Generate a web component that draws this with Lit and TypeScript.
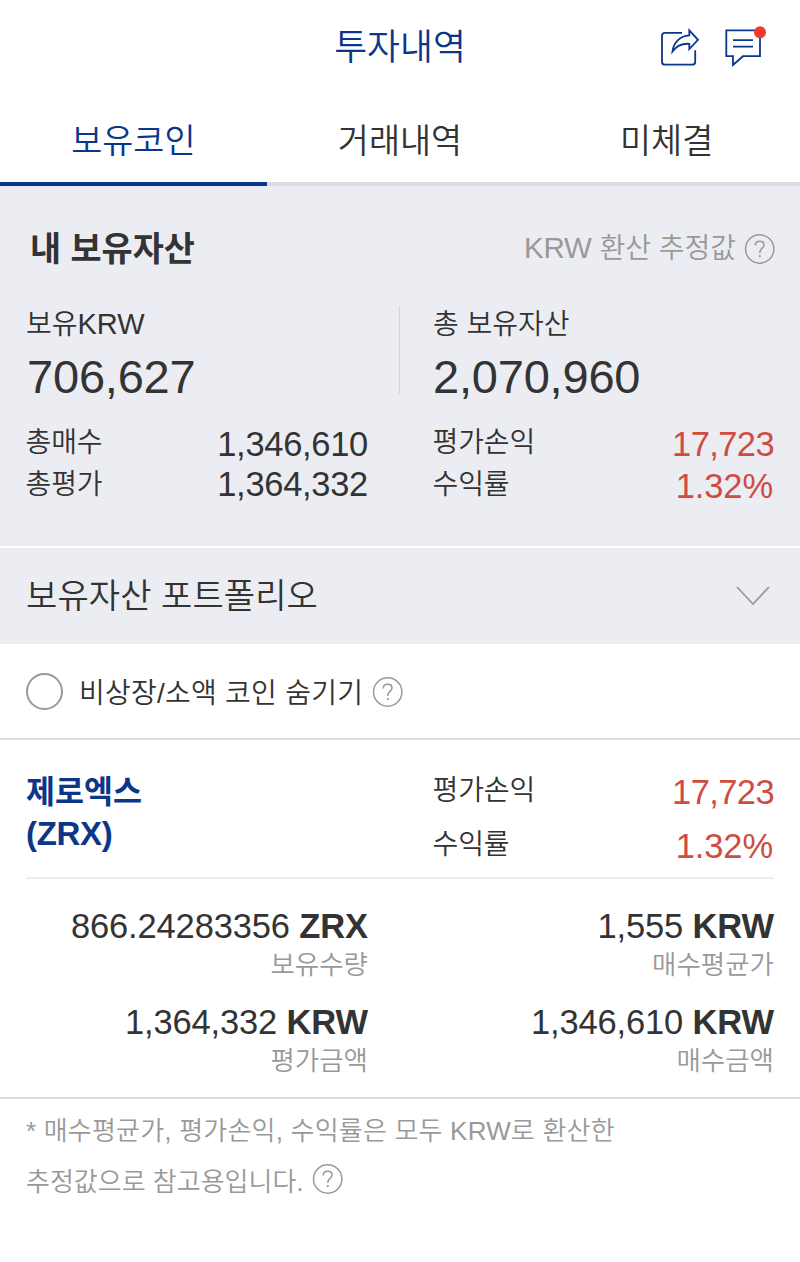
import { LitElement, html, css, svg } from "lit";
import { customElement, property } from "lit/decorators.js";

@customElement("help-icon")
class HelpIcon extends LitElement {
  static styles = css`
    :host { display: block; width: 32px; height: 32px; flex: none; }
    svg { display: block; }
  `;
  render() {
    return html`<svg width="32" height="32" viewBox="0 0 32 32" fill="none" stroke="#999" stroke-width="1.5">
      <circle cx="15.7" cy="16" r="14.2"></circle>
      <path d="M11.3 12.4C11.3 9.8 13 8.3 15.7 8.3C18.3 8.3 20 9.8 20 12C20 14 18.7 14.9 17.5 15.9C16.3 16.9 15.8 17.6 15.8 19.9"></path>
      <path d="M15.8 22.1V24.1" stroke-width="1.8"></path>
    </svg>`;
  }
}

@customElement("amount-cell")
class AmountCell extends LitElement {
  @property() value = "";
  @property() unit = "";
  @property() label = "";
  static styles = css`
    :host { display: block; text-align: right; white-space: nowrap; }
    .value { font-size: 34.5px; line-height: 40px; color: #333; letter-spacing: -0.15px; }
    .unit { font-weight: 700; letter-spacing: -0.1px; }
    .label { font-size: 26.5px; line-height: 39px; height: 38px; color: #999; font-weight: 350; }
  `;
  render() {
    return html`<div class="value">${this.value} <span class="unit">${this.unit}</span></div>
      <div class="label">${this.label}</div>`;
  }
}

@customElement("app-root")
class AppRoot extends LitElement {
  static styles = css`
    :host {
      display: block; width: 800px; height: 1262px; overflow: hidden; background: #fff; color: #333;
      font-family: "Liberation Sans", "Noto Sans CJK KR", sans-serif; white-space: nowrap; font-weight: 350;
    }
    * { box-sizing: border-box; }
    svg { display: block; }
    .header { height: 98px; display: grid; grid-template-columns: 1fr auto 1fr; align-items: start; }
    .title { grid-column: 2; font-size: 35.8px; line-height: 96px; color: #0c3688; }
    .actions { display: flex; justify-content: flex-end; gap: 20px; padding: 24px 32px 0 0; }
    .tabs { display: grid; grid-template-columns: repeat(3, 1fr); height: 88px; }
    .tab { text-align: center; font-size: 33.8px; line-height: 86px; height: 88px; border-bottom: 4px solid #dcdcdc; }
    .tab.active { color: #0c3688; border-bottom-color: #0c3688; }
    .assets { height: 362px; background: #ecedf3; border-bottom: 2px solid #fff; }
    .heading { height: 124px; display: flex; align-items: center; justify-content: space-between; padding: 2px 24px 0 30px; }
    .heading-title { font-size: 33.8px; font-weight: 700; line-height: 122px; }
    .estimate { display: flex; align-items: center; gap: 8px; color: #999; font-size: 28px; line-height: 122px; }
    .latin { font-size: 29px; line-height: 1; }
    .estimate .latin { font-size: 29.5px; letter-spacing: -0.2px; }
    .columns { display: grid; grid-template-columns: 1fr 1fr; padding: 0 26px 0 26px; }
    .left { padding-right: 32px; }
    .right { padding-left: 33px; }
    .top { height: 108px; }
    .top-label { font-size: 28px; line-height: 30px; height: 30px; }
    .top-value { font-size: 47px; line-height: 74px; letter-spacing: -0.2px; }
    .left .top-value { padding-left: 1px; }
    .left .top { margin-right: -32px; position: relative; }
    .left .top::after { content: ""; position: absolute; right: 0; top: -4px; width: 1px; height: 88px; background: #d4d5db; }
    .pair { display: flex; justify-content: space-between; align-items: flex-start; }
    .pair-labels { font-size: 28px; line-height: 41.5px; padding-top: 4px; margin-left: -0.5px; letter-spacing: -0.1px; }
    .pair-values { font-size: 34.5px; line-height: 39.5px; padding-top: 7px; text-align: right; letter-spacing: -0.3px; }
    .right .pair-values { line-height: 41.5px; padding-top: 6px; }
    .red { color: #ce4c42; }
    .profit { letter-spacing: -0.6px; }
    .rate { padding-right: 1px; letter-spacing: -0.1px; }
    .portfolio { height: 96px; background: #ecedf3; display: flex; align-items: center; justify-content: space-between; padding: 0 30px 0 26px; font-size: 34px; letter-spacing: 0.1px; line-height: 94px; }
    .filter { height: 96px; display: flex; align-items: center; padding-left: 26px; border-bottom: 2px solid #dcdcdc; }
    .radio { width: 37px; height: 37px; border: 2px solid #999; border-radius: 50%; }
    .filter-label { font-size: 28px; line-height: 90px; margin: 5px 9px 0 16px; letter-spacing: 0.25px; }
    .filter help-icon { margin-top: 2px; }
    .coin { display: grid; grid-template-columns: 1fr 1fr; height: 139px; margin: 0 26px; border-bottom: 2px solid #eee; }
    .coin-name { font-size: 31.5px; line-height: 41px; font-weight: 700; color: #0c3688; padding-top: 32px; }
    .coin-code { font-size: 33px; letter-spacing: -0.3px; }
    .coin .pair-labels { line-height: 54px; padding-top: 24px; }
    .coin .right .pair-values { line-height: 54px; padding-top: 25px; }
    .amounts { display: grid; grid-template-columns: 342px 1fr; row-gap: 18px; margin: 0 26px; padding-top: 27px; height: 218px; align-content: start; }
    .note { border-top: 2px solid #dcdcdc; padding: 7px 26px 0; color: #999; font-size: 26px; line-height: 51px; }
    .note-line { display: flex; gap: 8px; height: 51px; }
    .note-line.first { letter-spacing: 0.2px; }
    .note-line help-icon { margin-top: 6px; }
  `;

  render() {
    return html`
      <div class="header">
        <div class="title">투자내역</div>
        <div class="actions">
          <svg width="44" height="46" viewBox="656 24 44 46" fill="none" stroke="#0c3688" stroke-width="1.8">
            <path d="M682 32.8H665Q662 32.8 662 35.8V61.7Q662 64.7 665 64.7H692.2Q695.2 64.7 695.2 61.7V50.2"></path>
            <path d="M689.3 30.3L698 39.8L689.3 49V43.8C682 43.3 676 46.5 672.5 51.5C673.3 42.8 680 35.8 689.3 35.3Z"></path>
          </svg>
          ${svg`<svg width="48" height="46" viewBox="720 24 48 46" fill="none" stroke="#0c3688" stroke-width="1.8">
            <path d="M726.3 30.3H760V56.2H743L733 65V56.2H726.3ZM733 40.2H753M733 46.6H753"></path>
            <circle cx="760" cy="32.3" r="6" fill="#ee3a30" stroke="none"></circle>
          </svg>`}
        </div>
      </div>
      <div class="tabs">
        <div class="tab active">보유코인</div>
        <div class="tab">거래내역</div>
        <div class="tab">미체결</div>
      </div>
      <div class="assets">
        <div class="heading">
          <div class="heading-title">내 보유자산</div>
          <div class="estimate"><span><span class="latin">KRW</span> 환산 추정값</span><help-icon></help-icon></div>
        </div>
        <div class="columns">
          <div class="left">
            <div class="top">
              <div class="top-label">보유<span class="latin">KRW</span></div>
              <div class="top-value">706,627</div>
            </div>
            <div class="pair">
              <div class="pair-labels">총매수<br />총평가</div>
              <div class="pair-values">1,346,610<br />1,364,332</div>
            </div>
          </div>
          <div class="right">
            <div class="top">
              <div class="top-label">총 보유자산</div>
              <div class="top-value">2,070,960</div>
            </div>
            <div class="pair">
              <div class="pair-labels">평가손익<br />수익률</div>
              <div class="pair-values red"><div class="profit">17,723</div><div class="rate">1.32%</div></div>
            </div>
          </div>
        </div>
      </div>
      <div class="portfolio">
        <span>보유자산 포트폴리오</span>
        <svg width="34" height="20" viewBox="0 0 34 20" fill="none" stroke="#999" stroke-width="1.8"><path d="M1 1L17 18L33 1"></path></svg>
      </div>
      <div class="filter">
        <div class="radio"></div>
        <div class="filter-label">비상장/소액 코인 숨기기</div>
        <help-icon></help-icon>
      </div>
      <div class="coin">
        <div class="coin-name">제로엑스<div class="coin-code">(ZRX)</div></div>
        <div class="right">
          <div class="pair">
            <div class="pair-labels">평가손익<br />수익률</div>
            <div class="pair-values red"><div class="profit">17,723</div><div class="rate">1.32%</div></div>
          </div>
        </div>
      </div>
      <div class="amounts">
        <amount-cell value="866.24283356" unit="ZRX" label="보유수량"></amount-cell>
        <amount-cell value="1,555" unit="KRW" label="매수평균가"></amount-cell>
        <amount-cell value="1,364,332" unit="KRW" label="평가금액"></amount-cell>
        <amount-cell value="1,346,610" unit="KRW" label="매수금액"></amount-cell>
      </div>
      <div class="note">
        <div class="note-line first">* 매수평균가, 평가손익, 수익률은 모두 KRW로 환산한</div>
        <div class="note-line">추정값으로 참고용입니다.<help-icon></help-icon></div>
      </div>
    `;
  }
}
